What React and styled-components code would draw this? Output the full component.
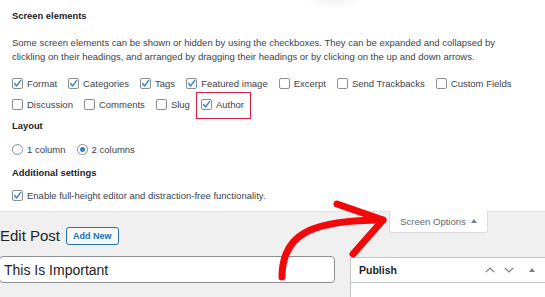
import React from 'react';
import styled, { createGlobalStyle } from 'styled-components';

const GlobalStyle = createGlobalStyle`
  body {
    margin: 0;
    font-family: "Liberation Sans", Arial, sans-serif;
    background: #f0f0f1;
  }
`;

const Page = styled.div`
  position: relative;
  width: 545px;
  height: 297px;
  overflow: hidden;
  background: #f0f0f1;
`;

const Panel = styled.div`
  box-sizing: border-box;
  height: 212px;
  padding: 9px 12px 0;
  background: radial-gradient(ellipse 28px 9px at 333px 0, rgba(0, 0, 0, 0.05), transparent), #fff;
  border-bottom: 1px solid #e2e3e5;
  color: #3c434a;
  font-size: 9.5px;
`;

const Heading = styled.h5`
  margin: ${(p) => p.$top || 0}px 0 0;
  font-size: 9.4px;
  line-height: 14px;
  font-weight: bold;
  color: #1d2327;
`;

const Description = styled.p`
  margin: 13px 0 0;
  line-height: 14px;
`;

const OptionRow = styled.div`
  display: flex;
  flex-wrap: wrap;
  column-gap: 11px;
  row-gap: 8px;
  margin-top: ${(p) => p.$top || 0}px;
`;

const Option = styled.label`
  position: relative;
  display: flex;
  align-items: center;
  gap: 4px;
  height: 13px;
  line-height: 13px;
  white-space: nowrap;

  ${(p) =>
    p.$highlight &&
    `
    &::after {
      content: '';
      position: absolute;
      top: -6px;
      bottom: -8px;
      left: -5px;
      right: -7px;
      border: 1px solid #dc1f45;
    }
  `}
`;

const Box = styled.span`
  box-sizing: border-box;
  display: inline-flex;
  align-items: center;
  justify-content: center;
  width: 11px;
  height: 11px;
  border: 1px solid #8c8f94;
  border-radius: 2px;
  background: #fff;
`;

const Radio = styled.span`
  box-sizing: border-box;
  display: inline-flex;
  align-items: center;
  justify-content: center;
  width: 11px;
  height: 11px;
  border: 1px solid #8c8f94;
  border-radius: 50%;
  background: #fff;

  &::before {
    content: '';
    display: ${(p) => (p.$on ? 'block' : 'none')};
    width: 5px;
    height: 5px;
    border-radius: 50%;
    background: #3582c4;
  }
`;

const Check = () => (
  <svg width="9" height="9" viewBox="0 0 9 9">
    <polyline points="1.6,4.6 3.6,6.9 7.6,1.6" fill="none" stroke="#3582c4" strokeWidth="1.5" strokeLinecap="round" strokeLinejoin="round" />
  </svg>
);

function CheckOption({ label, checked, highlight }) {
  return (
    <Option $highlight={highlight}>
      <Box>{checked && <Check />}</Box>
      {label}
    </Option>
  );
}

const TopBar = styled.div`
  display: flex;
  justify-content: space-between;
  align-items: flex-start;
  padding-right: 57px;
`;

const TitleGroup = styled.div`
  display: flex;
  align-items: center;
  gap: 6px;
  margin-top: 15px;
`;

const PageTitle = styled.h1`
  margin: 0;
  font-size: 15px;
  line-height: 18px;
  font-weight: normal;
  color: #1d2327;
`;

const AddNew = styled.button`
  box-sizing: border-box;
  height: 18px;
  padding: 0 6px;
  border: 1px solid #2271b1;
  border-radius: 3px;
  background: #f6f7f7;
  color: #2271b1;
  font-family: "Liberation Sans", Arial, sans-serif;
  font-size: 9px;
  font-weight: bold;
`;

const ScreenTab = styled.div`
  box-sizing: border-box;
  display: flex;
  align-items: center;
  justify-content: center;
  gap: 5px;
  width: 99px;
  height: 22px;
  margin-top: -1px;
  background: #fff;
  border: 1px solid #dcdcde;
  border-top: none;
  border-radius: 0 0 3px 3px;
  color: #646970;
  font-size: 9.5px;
`;

const TabArrow = styled.span`
  width: 0;
  height: 0;
  border-left: 3px solid transparent;
  border-right: 3px solid transparent;
  border-bottom: 4px solid #787c82;
  margin-top: -1px;
`;

const EditorRow = styled.div`
  display: flex;
  align-items: flex-start;
  margin-top: 11px;
`;

const TitleInput = styled.input`
  box-sizing: border-box;
  width: 336px;
  height: 27px;
  margin: 0 0 0 -1px;
  padding: 0 4px;
  border: 1px solid #8c8f94;
  border-radius: 4px;
  background: #fff;
  color: #1d2327;
  font-family: "Liberation Sans", Arial, sans-serif;
  font-size: 14px;
  outline: none;
`;

const Sidebar = styled.div`
  flex: 1;
  height: 60px;
  margin: 1px 0 0 15px;
  background: #fff;
  border: 1px solid #c3c4c7;
  border-right: none;
`;

const BoxHeader = styled.div`
  display: flex;
  align-items: center;
  justify-content: space-between;
  height: 24px;
  padding: 0 10px 0 8px;
  border-bottom: 1px solid #c3c4c7;
`;

const BoxTitle = styled.h2`
  margin: 0;
  font-size: 10.5px;
  font-weight: bold;
  color: #1d2327;
`;

const HandleGroup = styled.div`
  display: flex;
  align-items: center;
  gap: 9px;
`;

const Chevron = ({ down }) => (
  <svg width="10" height="6" viewBox="0 0 10 6">
    <polyline
      points={down ? '0.8,0.8 5,5 9.2,0.8' : '0.8,5.2 5,1 9.2,5.2'}
      fill="none"
      stroke="#787c82"
      strokeWidth="1.2"
    />
  </svg>
);

const Toggle = () => (
  <svg width="6" height="4" viewBox="0 0 6 4" style={{ marginLeft: 6 }}>
    <polygon points="0,4 3,0 6,4" fill="#787c82" />
  </svg>
);

const Overlay = styled.svg`
  position: absolute;
  top: 0;
  left: 0;
  pointer-events: none;
`;

export default function App() {
  return (
    <Page>
      <GlobalStyle />
      <Panel>
        <Heading>Screen elements</Heading>
        <Description>
          Some screen elements can be shown or hidden by using the checkboxes. They can be expanded and collapsed by
          <br />
          clickling on their headings, and arranged by dragging their headings or by clicking on the up and down arrows.
        </Description>
        <OptionRow $top={13}>
          <CheckOption label="Format" checked />
          <CheckOption label="Categories" checked />
          <CheckOption label="Tags" checked />
          <CheckOption label="Featured image" checked />
          <CheckOption label="Excerpt" />
          <CheckOption label="Send Trackbacks" />
          <CheckOption label="Custom Fields" />
          <CheckOption label="Discussion" />
          <CheckOption label="Comments" />
          <CheckOption label="Slug" />
          <CheckOption label="Author" checked highlight />
        </OptionRow>
        <Heading $top={8}>Layout</Heading>
        <OptionRow $top={10}>
          <Option>
            <Radio />1 column
          </Option>
          <Option>
            <Radio $on />2 columns
          </Option>
        </OptionRow>
        <Heading $top={10}>Additional settings</Heading>
        <OptionRow $top={9}>
          <CheckOption label="Enable full-height editor and distraction-free functionality." checked />
        </OptionRow>
      </Panel>

      <TopBar>
        <TitleGroup>
          <PageTitle>Edit Post</PageTitle>
          <AddNew>Add New</AddNew>
        </TitleGroup>
        <ScreenTab>
          Screen Options <TabArrow />
        </ScreenTab>
      </TopBar>

      <EditorRow>
        <TitleInput value="This Is Important" readOnly />
        <Sidebar>
          <BoxHeader>
            <BoxTitle>Publish</BoxTitle>
            <HandleGroup>
              <Chevron />
              <Chevron down />
              <Toggle />
            </HandleGroup>
          </BoxHeader>
        </Sidebar>
      </EditorRow>

      <Overlay width="545" height="297" viewBox="0 0 545 297">
        <g fill="none" stroke="#f20a0a" strokeWidth="7" strokeLinecap="round" strokeLinejoin="round">
          <path d="M282,277 C282,232 315,220 383,220" />
          <path d="M337,204 L383,220 L353,254" />
        </g>
      </Overlay>
    </Page>
  );
}
